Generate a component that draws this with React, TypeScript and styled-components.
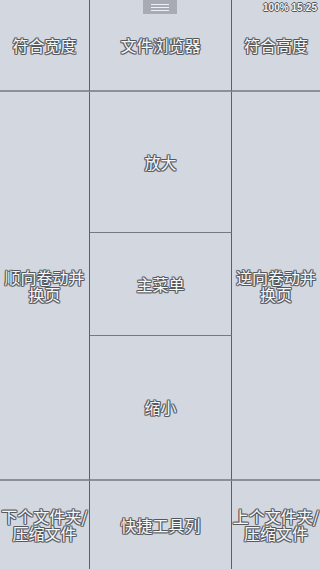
import React from "react";
import styled, { createGlobalStyle } from "styled-components";

const Global = createGlobalStyle`
  html, body { margin: 0; padding: 0; background: #d3d7e0; }
  body { font-family: "Noto Sans CJK SC", "Noto Sans", sans-serif; }
`;

const Screen = styled.div`
  position: relative;
  width: 320px;
  height: 569px;
  overflow: hidden;
  background: #d3d7e0;
  display: grid;
  grid-template-columns: 90px 142px 88px;
  grid-template-rows: 92px 141px 103px 145px 88px;
`;

const Cell = styled.div<{ $col: number; $row: number; $span?: number; $right?: boolean; $bottom?: "thick" | "thin" | "none" }>`
  grid-column: ${(p) => p.$col};
  grid-row: ${(p) => (p.$span ? `${p.$row} / span ${p.$span}` : p.$row)};
  box-sizing: border-box;
  display: flex;
  align-items: center;
  justify-content: center;
  text-align: center;
  border-right: ${(p) => (p.$right ? "1px solid #5d606a" : "none")};
  border-bottom: ${(p) =>
    p.$bottom === "thick" ? "2px solid #8d9099" : p.$bottom === "thin" ? "1px solid #767983" : "none"};
`;

const Label = styled.span`
  font-size: 16px;
  line-height: 17px;
  color: #f6f7f9;
  letter-spacing: 0;
  text-shadow: 1px 0 0 #55575d, -1px 0 0 #55575d, 0 1px 0 #55575d, 0 -1px 0 #55575d,
    1px 1px 0 #7a7c82, -1px -1px 0 #7a7c82, 1px -1px 0 #7a7c82, -1px 1px 0 #7a7c82;
`;

const Handle = styled.div`
  position: absolute;
  top: 0;
  left: 143px;
  width: 34px;
  height: 14px;
  background: #a8abb3;
  display: flex;
  flex-direction: column;
  align-items: center;
  justify-content: center;
  gap: 2px;
`;

const HandleLine = styled.div`
  width: 18px;
  height: 1px;
  background: #eef0f3;
`;

const Status = styled.div`
  position: absolute;
  top: 2px;
  right: 3px;
  font-family: "Liberation Sans", Arial, sans-serif;
  font-size: 10px;
  font-weight: bold;
  line-height: 11px;
  color: #f4f5f7;
  text-shadow: 1px 0 0 #55575d, -1px 0 0 #55575d, 0 1px 0 #55575d, 0 -1px 0 #55575d;
`;

export default function App() {
  return (
    <>
      <Global />
      <Screen>
        <Cell $col={1} $row={1} $right $bottom="thick"><Label>符合宽度</Label></Cell>
        <Cell $col={2} $row={1} $right $bottom="thick"><Label>文件浏览器</Label></Cell>
        <Cell $col={3} $row={1} $bottom="thick"><Label>符合高度</Label></Cell>

        <Cell $col={1} $row={2} $span={3} $right $bottom="thick"><Label>顺向卷动并<br />换页</Label></Cell>
        <Cell $col={2} $row={2} $right $bottom="thin"><Label>放大</Label></Cell>
        <Cell $col={2} $row={3} $right $bottom="thin"><Label>主菜单</Label></Cell>
        <Cell $col={2} $row={4} $right $bottom="thick"><Label>缩小</Label></Cell>
        <Cell $col={3} $row={2} $span={3} $bottom="thick"><Label>逆向卷动并<br />换页</Label></Cell>

        <Cell $col={1} $row={5} $right><Label>下个文件夹/<br />压缩文件</Label></Cell>
        <Cell $col={2} $row={5} $right><Label>快捷工具列</Label></Cell>
        <Cell $col={3} $row={5}><Label>上个文件夹/<br />压缩文件</Label></Cell>

        <Handle>
          <HandleLine />
          <HandleLine />
          <HandleLine />
        </Handle>
        <Status>100% 15:25</Status>
      </Screen>
    </>
  );
}
